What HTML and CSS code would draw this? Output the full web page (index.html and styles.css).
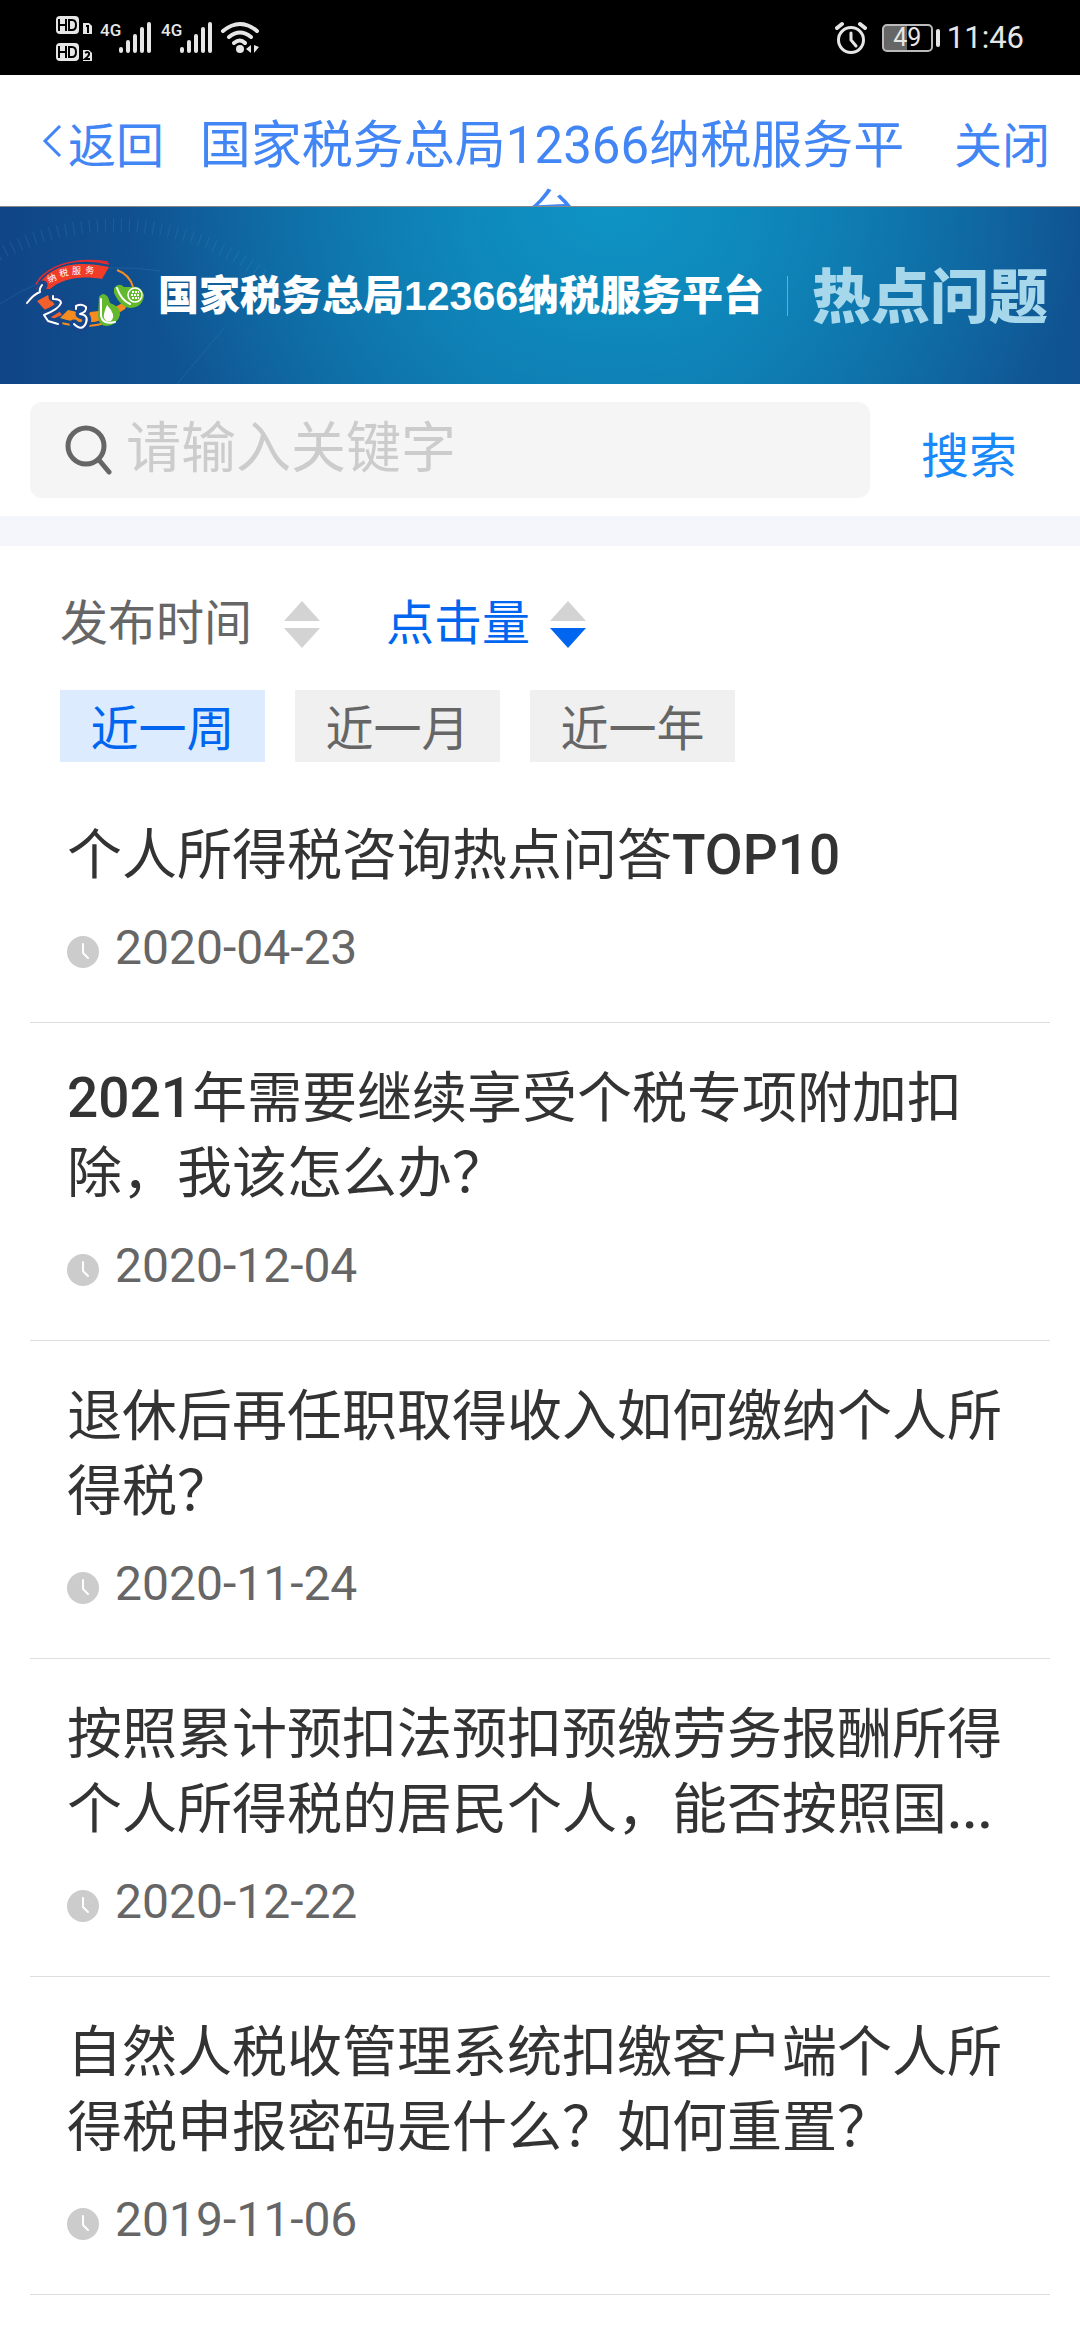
FILE: index.html
```html
<!DOCTYPE html>
<html lang="zh-CN">
<head>
<meta charset="utf-8">
<meta name="viewport" content="width=device-width">
<title>热点问题</title>
<link rel="stylesheet" href="styles.css">
</head>
<body>
<div class="status">
  <div class="status-side">
    <svg width="210" height="50" viewBox="0 0 210 50" aria-hidden="true">
      <g fill="#e6e6e6">
        <rect x="1" y="3" width="23" height="18" rx="4"/><path d="M28 10h6l3 3v8h-9z"/>
        <rect x="1" y="30" width="23" height="18" rx="4"/><path d="M28 37h6l3 3v8h-9z"/>
      </g>
      <g fill="none" stroke="#000" stroke-width="2">
        <path d="M4 6v12M11 6v12M4 12h7M14 7h3q4 0 4 5t-4 5h-3z"/>
        <path d="M4 33v12M11 33v12M4 39h7M14 34h3q4 0 4 5t-4 5h-3z"/>
        <path d="M31 13h2v7M30 40q3-2 4 0t-4 6h5"/>
      </g>
      <g stroke="#e6e6e6" stroke-width="4" stroke-linecap="round">
        <path d="M66 36v2M73 29v9M80 23v15M87 16v22M94 11v27"/>
        <path d="M127 36v2M134 29v9M141 23v15M148 16v22M155 11v27"/>
      </g>
      <g fill="none" stroke="#e6e6e6" stroke-width="4" stroke-linecap="round">
        <path d="M168 18q17-14 34 0M174 24q11-9 22 0M179 30q6-5 11 0"/>
      </g>
      <circle cx="185" cy="36" r="4" fill="#e6e6e6"/>
      <path d="M196 32v8l-5-4zM199 32v8l5-6z" fill="#e6e6e6"/>
      <g class="net"><text x="45" y="23">4G</text><text x="106" y="23">4G</text></g>
    </svg>
  </div>
  <div class="status-side">
    <svg width="32" height="34" viewBox="0 0 32 34" fill="none" stroke="#e6e6e6" stroke-linecap="round" aria-hidden="true">
      <circle cx="16" cy="19" r="12.500" stroke-width="3"/><path d="M16 12v7l5 6" stroke-width="3"/><path d="M2 7l5-4M25 3l5 4" stroke-width="4"/>
    </svg>
    <div class="battery"><span>49</span></div>
    <span class="clock">11:46</span>
  </div>
</div>
<header class="nav">
  <a class="nav-link" href="#"><svg width="20" height="34" viewBox="0 0 20 34" fill="none" stroke="#4285f4" stroke-width="3" aria-hidden="true"><path d="M18 1L3 16l15 15"/></svg>返回</a>
  <h1 class="nav-title">国家税务总局12366纳税服务平台</h1>
  <a class="nav-link" href="#">关闭</a>
</header>
<section class="banner">
  <svg class="rings" width="300" height="177" viewBox="0 0 300 177" fill="none" aria-hidden="true">
    <circle cx="115" cy="263" r="245" stroke="#4a9cc8" stroke-opacity=".22" stroke-width="13" stroke-dasharray="1 7"/>
    <path d="M0 97Q70 50 160 64M225 120L177 177" stroke="#4a9cc8" stroke-opacity=".2"/>
  </svg>
  <svg class="logo" width="122" height="76" viewBox="0 0 122 76" fill="none" aria-hidden="true">
    <path d="M11 31C25 4 55 3 84 9l-7 12C55 17 36 21 25 31z" fill="#f03c28"/>
    <path d="M11 26C25 4 55-1 84 6M14 21C30 4 55 0 83 4" stroke="#e22b2e" stroke-width="1.500"/>
    <path d="M12 43l11-6 14 20-9 4z" fill="#f4602b"/>
    <path d="M35 60l8-8q22 6 49-4l14-8-6 11q-28 21-65 9z" fill="#f68b1f"/>
    <path d="M92 12q13 5 16 17M36 65q27 7 50-2" stroke="#f68b1f" stroke-width="2"/>
    <g stroke="#17468a" stroke-width="9" stroke-linecap="round" stroke-linejoin="round"><path d="M2 45Q10 36 15 34l3-7M28 39q8 0 8 6-2 6-17 12l3 6 11 3M51 49q6-5 10 0 2 5-6 7 9 2 6 9-4 9-12 1"/></g>
    <g stroke="#fff" stroke-width="2" stroke-linecap="round" stroke-linejoin="round"><path d="M2 45Q9 36 15 34q-1-3 2-7M28 38v3q8 0 8 4-2 6-17 12l4 6 10 3M51 51v-3q6-3 10 1 1 5-6 7 9 1 6 9-4 9-12 1"/></g>
    <path d="M74 39q4-6 9 0l2 6q10 3 10 12-3 10-13 11-8 0-9-9z" fill="#64b82e"/>
    <path d="M89 30q5-6 10-1h8q9-2 12 8-1 12-13 13-10 0-17-15z" fill="#64b82e"/>
    <path d="M82 47q9 10 5 15-5 4-8-2-1-4 3-13z" fill="#fff"/>
    <path d="M76 41v17q2 9 14 6M92 30q4 12 13 16" stroke="#fff" stroke-width="2" stroke-linecap="round"/>
    <circle cx="110" cy="37" r="7" stroke="#fff" stroke-width="1.500"/><path d="M107 34h7M106 37h8M107 40h7" stroke="#fff" stroke-width="2" stroke-dasharray="2 1"/>
    <g class="tiny"><text transform="translate(24 25) rotate(-24)">纳</text><text transform="translate(35 19) rotate(-12)">税</text><text transform="translate(47 16)">服</text><text transform="translate(60 15) rotate(5)">务</text></g>
  </svg>
  <strong class="banner-name">国家税务总局12366纳税服务平台</strong>
  <span class="banner-rule"></span>
  <strong class="banner-topic">热点问题</strong>
</section>
<form class="search">
  <label class="search-box">
    <svg width="48" height="56" viewBox="0 0 48 56" fill="none" stroke="#666" aria-hidden="true"><circle cx="22" cy="24" r="18" stroke-width="5"/><path d="M35 38l10 12" stroke-width="5" stroke-linecap="round"/></svg>
    <input type="text" placeholder="请输入关键字" aria-label="请输入关键字">
  </label>
  <button class="search-go" type="button">搜索</button>
</form>
<main>
  <div class="sorts">
    <button class="sort" type="button">发布时间<svg width="36" height="48" viewBox="0 0 36 48" aria-hidden="true"><path class="up" d="M18 0l18 20H0z"/><path class="down" d="M0 27h36L18 47z"/></svg></button>
    <button class="sort is-on" type="button">点击量<svg width="36" height="48" viewBox="0 0 36 48" aria-hidden="true"><path class="up" d="M18 0l18 20H0z"/><path class="down" d="M0 27h36L18 47z"/></svg></button>
  </div>
  <div class="chips">
    <button class="chip is-on" type="button">近一周</button>
    <button class="chip" type="button">近一月</button>
    <button class="chip" type="button">近一年</button>
  </div>
  <svg class="defs" width="0" height="0" aria-hidden="true"><symbol id="time" viewBox="0 0 32 32"><circle cx="16" cy="16" r="16" fill="#ccc"/><path d="M16 8v9l5 5" fill="none" stroke="#fff" stroke-width="2" stroke-linecap="round"/></symbol></svg>
  <ul class="list">
    <li class="item"><h2><a href="#">个人所得税咨询热点问答<b>TOP10</b></a></h2><p class="date"><svg width="32" height="32" aria-hidden="true"><use href="#time"/></svg><time>2020-04-23</time></p></li>
    <li class="item"><h2><a href="#"><b>2021</b>年需要继续享受个税专项附加扣除，我该怎么办？</a></h2><p class="date"><svg width="32" height="32" aria-hidden="true"><use href="#time"/></svg><time>2020-12-04</time></p></li>
    <li class="item"><h2><a href="#">退休后再任职取得收入如何缴纳个人所得税？</a></h2><p class="date"><svg width="32" height="32" aria-hidden="true"><use href="#time"/></svg><time>2020-11-24</time></p></li>
    <li class="item"><h2><a href="#">按照累计预扣法预扣预缴劳务报酬所得个人所得税的居民个人，能否按照国<b>...</b></a></h2><p class="date"><svg width="32" height="32" aria-hidden="true"><use href="#time"/></svg><time>2020-12-22</time></p></li>
    <li class="item"><h2><a href="#">自然人税收管理系统扣缴客户端个人所得税申报密码是什么？如何重置？</a></h2><p class="date"><svg width="32" height="32" aria-hidden="true"><use href="#time"/></svg><time>2019-11-06</time></p></li>
  </ul>
</main>
</body>
</html>
```

FILE: styles.css
```css
* { box-sizing: border-box; }

body {
  margin: 0;
  background: #fff;
  color: #333;
  font-family: Roboto, "Noto Sans CJK SC", sans-serif;
  font-size: 48px;
}

button, input {
  border: 0;
  padding: 0;
  background: none;
  color: inherit;
  font: inherit;
}

a { color: inherit; text-decoration: none; }
svg { display: block; flex: none; }

.status {
  display: flex;
  justify-content: space-between;
  align-items: center;
  height: 75px;
  padding: 0 56px 0 55px;
  background: #000;
  color: #e6e6e6;
}
.status-side { display: flex; align-items: center; }
.net { fill: #e6e6e6; font: 500 17px Roboto, sans-serif; }
.battery {
  position: relative;
  width: 51px;
  height: 28px;
  margin: 0 14px 0 15px;
  border: 2px solid #bbb;
  border-radius: 5px;
  background: linear-gradient(90deg, #666 23px, #000 23px);
  font-size: 25px;
  line-height: 24px;
  text-align: center;
}
.battery::after {
  content: "";
  position: absolute;
  top: 3px;
  right: -9px;
  width: 4px;
  height: 18px;
  border-radius: 2px;
  background: #e6e6e6;
}
.clock { font: 31px/40px Roboto, sans-serif; }

.nav {
  display: flex;
  justify-content: space-between;
  height: 132px;
  padding: 32px 30px 0 42px;
  overflow: hidden;
  border-bottom: 1px solid #888;
  color: #4285f4;
}
.nav-link {
  display: flex;
  align-items: center;
  gap: 6px;
  height: 70px;
}
.nav-title {
  flex: 1;
  margin: 0;
  padding: 4px 40px 0 26px;
  font-size: 51px;
  font-weight: 400;
  line-height: 69px;
  text-align: center;
}

.banner {
  position: relative;
  display: flex;
  align-items: center;
  height: 177px;
  padding: 0 30px 0 25px;
  background:
    radial-gradient(ellipse 480px 360px at 610px 0, #0e94c4, rgba(14, 148, 196, 0)),
    linear-gradient(90deg, #104587 0, #0f6da6 45%, #0f70a8 65%, #105291 100%);
  color: #fff;
  white-space: nowrap;
}
.rings { position: absolute; top: 0; left: 0; }
.logo { position: relative; }
.tiny { fill: #fff; font: 9px "Noto Sans CJK SC", sans-serif; }
.banner-name {
  margin-left: 11px;
  font: 900 41px/60px "Liberation Sans", "Noto Sans CJK SC", sans-serif;
}
.banner-rule {
  flex: none;
  width: 1px;
  height: 40px;
  margin: 0 24px 0 23px;
  background: #5fb0d4;
}
.banner-topic {
  padding-bottom: 6px;
  color: #a6d7ea;
  font: 900 59px/80px "Noto Sans CJK SC", sans-serif;
}

.search {
  display: flex;
  padding: 18px 30px;
  border-bottom: 30px solid #f4f6fb;
}
.search-box {
  display: flex;
  flex: 1;
  align-items: center;
  gap: 14px;
  height: 96px;
  padding: 0 34px;
  border-radius: 12px;
  background: #f5f5f5;
}
.search-box input {
  flex: 1;
  min-width: 0;
  height: 96px;
  padding-bottom: 4px;
  outline: 0;
  font-size: 55px;
}
.search-box input::placeholder { color: #ccc; opacity: 1; }
.search-go {
  width: 180px;
  padding-top: 4px;
  padding-left: 18px;
  color: #1989fa;
}

.sorts {
  display: flex;
  gap: 66px;
  padding: 39px 60px 37px;
}
.sort {
  display: flex;
  align-items: center;
  gap: 32px;
  height: 68px;
  color: #666;
}
.sort.is-on { gap: 20px; color: #0066f0; }
.sort svg { margin-top: 12px; }
.up, .down { fill: #d3d3d3; }
.is-on .down { fill: #0066f0; }

.chips { display: flex; gap: 30px; padding: 0 60px; }
.chip {
  width: 205px;
  height: 72px;
  padding-top: 8px;
  background: #f0f0f0;
  color: #666;
  line-height: 64px;
}
.chip.is-on { background: #ddebff; color: #0066f0; }

.defs { position: absolute; }
.list { margin: 0; padding: 18px 30px 0; list-style: none; }
.item {
  padding: 38px 36px 37px 37px;
  border-bottom: 1px solid #ddd;
}
.item h2 {
  margin: 0;
  font-size: 55px;
  font-weight: 400;
  line-height: 75px;
}
.item b { font-weight: 500; }
.date {
  display: flex;
  align-items: center;
  gap: 16px;
  margin: 17px 0 0;
  color: #666;
  line-height: 75px;
}
.date svg { margin-top: 8px; }
```
